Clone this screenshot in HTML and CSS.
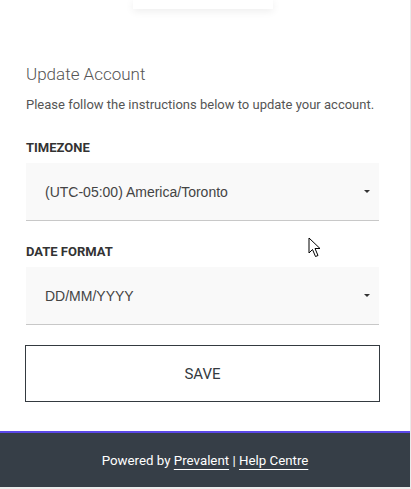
FILE: index.html
```html
<!DOCTYPE html>
<html lang="en">
<head>
  <meta charset="UTF-8" />
  <meta name="viewport" content="width=device-width, initial-scale=1.0"/>
  <title>Update Account</title>
  <link rel="stylesheet" href="styles.css">
</head>
<body>
  <div class="page">
    <!-- logo card, scrolled mostly out of view -->
    <div class="logo-card"></div>

    <div class="content">
      <h2 class="title">Update Account</h2>
      <p class="intro">Please follow the instructions below to update your account.</p>

      <div class="field">
        <label class="field-label">TIMEZONE</label>
        <div class="select">
          <span>(UTC-05:00) America/Toronto</span>
          <span class="caret"></span>
        </div>
      </div>

      <div class="field">
        <label class="field-label">DATE FORMAT</label>
        <div class="select">
          <span>DD/MM/YYYY</span>
          <span class="caret"></span>
        </div>
      </div>

      <button class="btn-save" type="button">SAVE</button>
    </div>

    <div class="footer">
      <p>Powered by <a href="#">Prevalent</a> | <a href="#">Help Centre</a></p>
    </div>

    <!-- mouse pointer captured in the screenshot -->
    <svg class="pointer" width="14" height="22" viewBox="0 0 14 22">
      <path d="M1 1 L1 16 L4.5 12.5 L7.5 19.5 L10 18.5 L7 11.5 L12 11.5 Z" fill="#fff" stroke="#000" stroke-width="1" stroke-linejoin="round"/>
    </svg>
  </div>
</body>
</html>
```

FILE: styles.css
```css
body {
  margin: 0;
  background: #ebebeb;
  font-family: Roboto, "Open Sans", sans-serif;
  color: #555;
}
.page {
  position: relative;
  width: 410px;
  height: 487px;
  background: #fff;
  display: flex;
  flex-direction: column;
  overflow: hidden;
}
.logo-card {
  width: 140px;
  height: 9px;
  margin-left: 133px;
  background: #fff;
  box-shadow: 0 2px 8px rgba(0, 0, 0, 0.08);
}
.content {
  flex: 1;
  padding: 53px 31px 0 26px;
}
.title {
  margin: 0;
  font-size: 17px;
  font-weight: 300;
  color: #555;
  line-height: 24px;
}
.intro {
  margin: 11px 0 0;
  font-size: 13px;
  line-height: 16px;
  color: #555;
  white-space: nowrap;
}
.field {
  margin-top: 27px;
}
.field + .field {
  margin-top: 23px;
}
.field-label {
  display: block;
  font-size: 13px;
  font-weight: 700;
  color: #333;
  line-height: 16px;
  margin-bottom: 7px;
}
.select {
  display: flex;
  align-items: center;
  justify-content: space-between;
  height: 57px;
  padding: 0 9px 0 19px;
  background: #f9f9f9;
  border-bottom: 1px solid #c8c8c8;
  font-family: "Liberation Sans", Arial, sans-serif;
  font-size: 14px;
  color: #444;
}
.caret {
  width: 0;
  height: 0;
  border-left: 3px solid transparent;
  border-right: 3px solid transparent;
  border-top: 3px solid #333;
}
.btn-save {
  display: block;
  width: 355px;
  height: 57px;
  margin: 20px 0 0 -1px;
  background: #fff;
  border: 1px solid #343a40;
  font-family: Roboto, "Open Sans", sans-serif;
  font-size: 15px;
  color: #343a40;
  cursor: pointer;
}
.footer {
  height: 54px;
  border-top: 2px solid #5b48e8;
  background: #363e47;
  color: #fff;
  font-size: 13.3px;
  display: flex;
  align-items: center;
  justify-content: center;
}
.footer p {
  margin: 0;
}
.footer a {
  color: #fff;
  text-decoration: underline;
  text-underline-offset: 4px;
}
.pointer {
  position: absolute;
  left: 308px;
  top: 237px;
}
```
